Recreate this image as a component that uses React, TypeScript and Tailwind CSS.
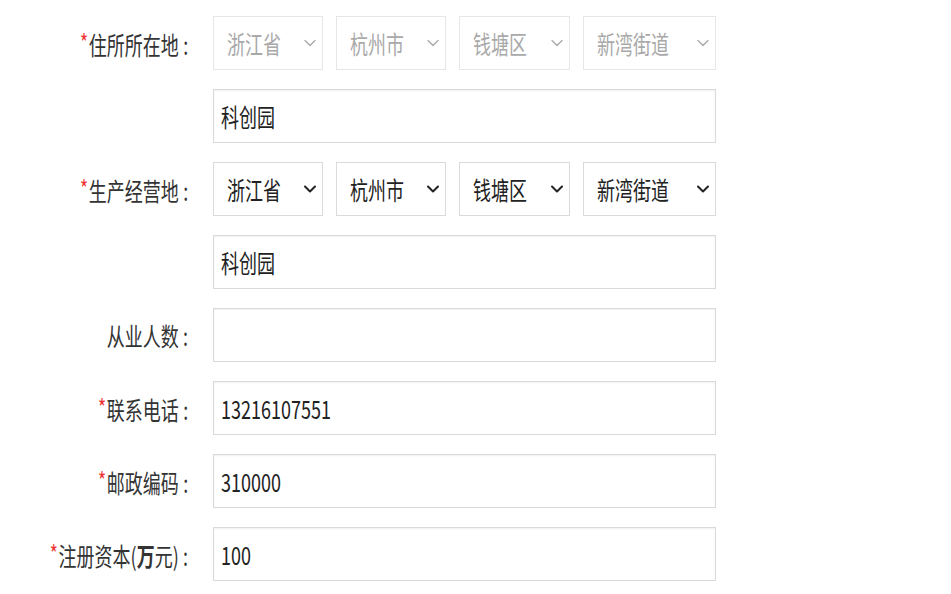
import React from "react";

const FONT = '"Noto Sans CJK SC", "Microsoft YaHei", sans-serif';

function Chevron({ dark }: { dark?: boolean }) {
  return (
    <svg width="12" height="8" viewBox="0 0 12 8" className="shrink-0">
      <path
        d="M1 1.5 L6 6.5 L11 1.5"
        fill="none"
        stroke={dark ? "#222" : "#a8a8a8"}
        strokeWidth={dark ? 2 : 1.3}
        strokeLinecap="round"
        strokeLinejoin="round"
      />
    </svg>
  );
}

function Txt({ children, className = "" }: { children: React.ReactNode; className?: string }) {
  return (
    <span className={`inline-block origin-left scale-x-[0.72] whitespace-nowrap ${className}`}>{children}</span>
  );
}

function Select({ text, w, disabled }: { text: string; w: string; disabled?: boolean }) {
  return (
    <div
      className={`${w} h-[54px] border flex items-center justify-between pl-[13px] pr-[6px] bg-white ${
        disabled ? "border-[#e6e6e6] text-[#a9a9a9]" : "border-[#dadada] text-[#222]"
      }`}
    >
      <div className="w-0 flex-1 overflow-visible">
        <Txt>{text}</Txt>
      </div>
      <Chevron dark={!disabled} />
    </div>
  );
}

function Input({ value }: { value?: string }) {
  return (
    <div className="w-[503px] h-[54px] border border-[#dadada] shadow-[inset_0_1px_2px_rgba(0,0,0,0.06)] flex items-center pl-[7px] text-[#222] bg-white">
      {value ? <Txt>{value}</Txt> : null}
    </div>
  );
}

function Label({ req, children }: { req?: boolean; children?: React.ReactNode }) {
  return (
    <div className="w-[188px] shrink-0 flex justify-end text-[#333]">
      <span className="inline-block origin-right scale-x-[0.72] whitespace-nowrap">
        {req ? <span className="text-[#e33] text-[24px] align-[3px] mr-[1px]">*</span> : null}
        {children}
        <span className="ml-[6px]">:</span>
      </span>
    </div>
  );
}

function Row({ label, req, children }: { label?: React.ReactNode; req?: boolean; children: React.ReactNode }) {
  return (
    <div className="flex items-center">
      {label ? <Label req={req}>{label}</Label> : <div className="w-[188px] shrink-0" />}
      <div className="ml-[25px] flex items-center gap-[13px]">{children}</div>
    </div>
  );
}

function Selects({ disabled }: { disabled?: boolean }) {
  return (
    <>
      <Select text="浙江省" w="w-[110px]" disabled={disabled} />
      <Select text="杭州市" w="w-[110px]" disabled={disabled} />
      <Select text="钱塘区" w="w-[111px]" disabled={disabled} />
      <Select text="新湾街道" w="w-[133px]" disabled={disabled} />
    </>
  );
}

export default function App() {
  return (
    <div
      className="w-[951px] h-[594px] bg-white overflow-hidden flex flex-col gap-[19px] pt-[16px] text-[25px] leading-none"
      style={{ fontFamily: FONT }}
    >
      <Row label="住所所在地" req>
        <Selects disabled />
      </Row>
      <Row>
        <Input value="科创园" />
      </Row>
      <Row label="生产经营地" req>
        <Selects />
      </Row>
      <Row>
        <Input value="科创园" />
      </Row>
      <Row label="从业人数">
        <Input />
      </Row>
      <Row label="联系电话" req>
        <Input value="13216107551" />
      </Row>
      <Row label="邮政编码" req>
        <Input value="310000" />
      </Row>
      <Row
        label={
          <>
            注册资本(<b className="font-bold">万</b>元)
          </>
        }
        req
      >
        <Input value="100" />
      </Row>
    </div>
  );
}
